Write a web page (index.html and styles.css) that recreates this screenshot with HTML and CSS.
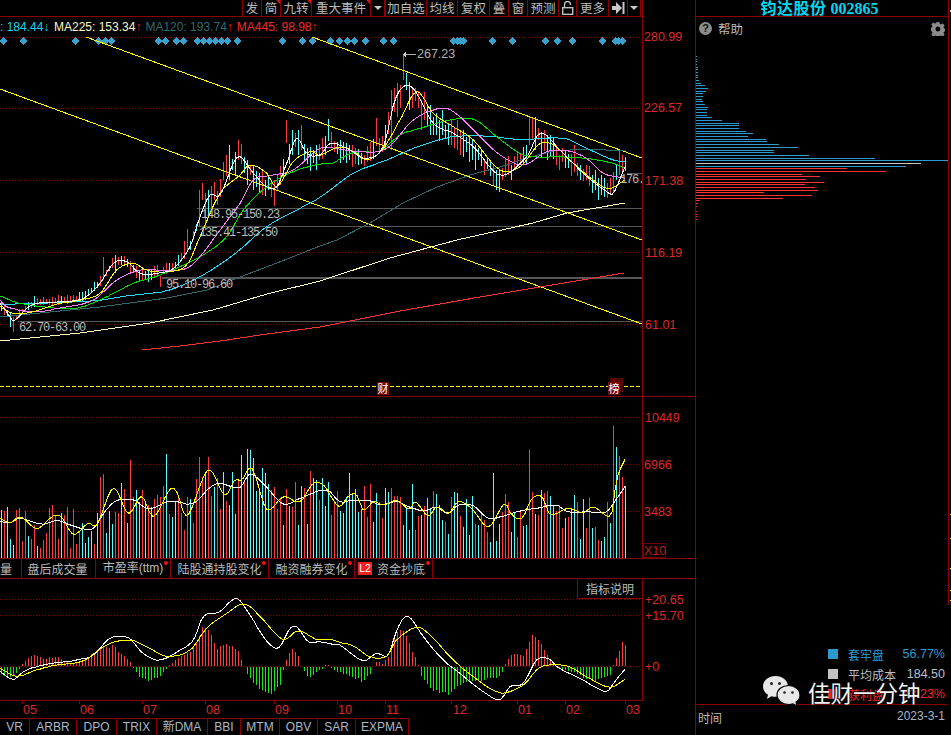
FILE: index.html
```html
<!DOCTYPE html>
<html lang="zh">
<head>
<meta charset="utf-8">
<title>钧达股份 002865</title>
<link rel="stylesheet" href="styles.css">
</head>
<body>
<div class="app">
  <main class="main">
    <section class="cell cell-price">
      <nav class="toolbar">
        <span class="tool w19">发</span>
        <span class="tool w19 flag">简</span>
        <span class="tool w31 flag">九转</span>
        <span class="tool w59 flag">重大事件</span>
        <span class="tool w14"><i class="caret"></i></span>
        <span class="tool w42 strong">加自选</span>
        <span class="tool w31">均线</span>
        <span class="tool w32">复权</span>
        <span class="tool w19">叠</span>
        <span class="tool w19">窗</span>
        <span class="tool w31">预测</span>
        <span class="tool w18">
          <svg class="tool-icon" width="12" height="14" viewBox="0 0 12 14"><path d="M2.5 6V3.5a3 3 0 0 1 6 0V4" fill="none" stroke="#c0c0c0" stroke-width="1.4"/><rect x="0.7" y="6.7" width="10" height="6.6" fill="none" stroke="#c0c0c0" stroke-width="1.4"/></svg>
        </span>
        <span class="tool w32">更多</span>
        <span class="tool w19">
          <svg class="tool-icon" width="13" height="12" viewBox="0 0 13 12"><path d="M0 4h4V0l6 6-6 6V8H0z" fill="#c8c8c8"/><rect x="10.5" y="0" width="2" height="12" fill="#c8c8c8"/></svg>
        </span>
        <span class="tool w13 last"><i class="caret"></i></span>
      </nav>
      <div class="legend">
        <span class="lg lg-cyan">: 184.44↓</span>
        <span class="lg lg-cream">MA225: 153.34<b class="up">↑</b></span>
        <span class="lg lg-teal">MA120: 193.74<b class="up">↑</b></span>
        <span class="lg lg-red">MA445: 98.98<b class="up">↑</b></span>
      </div>
      <svg id="price" class="chart" width="642" height="359" viewBox="0 37 642 359">
        <text class="note" x="417" y="58">267.23</text>
        <text class="lvl" x="201" y="218">148.95-150.23</text>
        <text class="lvl" x="199" y="236">135.41-135.50</text>
        <text class="lvl" x="166" y="288">95.10-96.60</text>
        <text class="lvl" x="19" y="331">62.70-63.00</text>
        <text class="lvl" x="620" y="183">176.</text>
        <rect x="610" y="378" width="13" height="14" fill="#5a0505"/>
        <rect x="377" y="382" width="12" height="13" fill="#7a0a0a"/>
        <rect x="608" y="382" width="12" height="13" fill="#7a0a0a"/>
        <text class="mark" x="377.5" y="393">财</text>
        <text class="mark" x="608.5" y="393">榜</text>
      </svg>
    </section>
    <aside class="cell-axis">
      <svg width="52" height="396" viewBox="643 0 52 396">
        <text class="ax" x="644" y="41">280.99</text>
        <text class="ax" x="644" y="112">226.57</text>
        <text class="ax" x="645" y="185">171.38</text>
        <text class="ax" x="645" y="257">116.19</text>
        <text class="ax" x="645" y="329">61.01</text>
      </svg>
    </aside>

    <section class="cell cell-vol">
      <svg id="vol" class="chart" width="642" height="161" viewBox="0 397 642 161"></svg>
    </section>
    <aside class="cell-axis">
      <svg width="52" height="161" viewBox="643 397 52 161">
        <text class="ax" x="645" y="422">10449</text>
        <text class="ax" x="644" y="469">6966</text>
        <text class="ax" x="644" y="516">3483</text>
        <rect x="643.5" y="543.5" width="22" height="14" class="x10-box"/>
        <text class="ax ax-dim" x="644" y="555">X10</text>
      </svg>
    </aside>

    <nav class="tabs">
      <span class="tab tab-cut">量</span>
      <span class="tab t74">盘后成交量</span>
      <span class="tab t75 dot">市盈率(ttm)</span>
      <span class="tab t98 dot">陆股通持股变化</span>
      <span class="tab t86 dot">融资融券变化</span>
      <span class="tab t78 dot"><em class="l2">L2</em>资金抄底</span>
    </nav>

    <section class="cell cell-macd">
      <svg id="macd" class="chart" width="642" height="121" viewBox="0 579 642 121"></svg>
      <span class="explain">指标说明</span>
    </section>
    <aside class="cell-axis">
      <svg width="52" height="121" viewBox="643 579 52 121">
        <text class="ax" x="645" y="604">+20.65</text>
        <text class="ax" x="645" y="620">+15.70</text>
        <text class="ax" x="645" y="671">+0</text>
      </svg>
    </aside>

    <div class="foot">
      <svg id="dates" class="dates" width="642" height="17" viewBox="0 701 642 17">
        <text class="dt" x="23" y="714">05</text>
        <text class="dt" x="80" y="714">06</text>
        <text class="dt" x="143" y="714">07</text>
        <text class="dt" x="206" y="714">08</text>
        <text class="dt" x="275" y="714">09</text>
        <text class="dt" x="338" y="714">10</text>
        <text class="dt" x="386" y="714">11</text>
        <text class="dt" x="453" y="714">12</text>
        <text class="dt" x="518" y="714">01</text>
        <text class="dt" x="566" y="714">02</text>
        <text class="dt" x="626" y="714">03</text>
      </svg>
      <nav class="bottom-tabs">
        <span class="bt b29">VR</span>
        <span class="bt b47">ARBR</span>
        <span class="bt b40">DPO</span>
        <span class="bt b40">TRIX</span>
        <span class="bt b51">新DMA</span>
        <span class="bt b33">BBI</span>
        <span class="bt b39">MTM</span>
        <span class="bt b38">OBV</span>
        <span class="bt b38">SAR</span>
        <span class="bt b53">EXPMA</span>
      </nav>
    </div>
  </main>

  <aside class="side">
    <header class="stock-title">钧达股份 <b>002865</b></header>
    <div class="help">
      <span class="help-q">?</span>
      <span class="help-text">帮助</span>
      <svg class="gear" width="14" height="14" viewBox="0 0 14 14"><path fill="#8c8c8c" fill-rule="evenodd" d="M5.600 0h2.800l.3 2 1.300.6 1.700-1.200 2 2-1.200 1.700.6 1.300 1.900.3v2.600l-1.900.3-.6 1.400 1.200 1.600-2 2-1.700-1.200-1.300.6-.3 1.900H5.600l-.3-1.900-1.300-.6-1.700 1.200-2-2 1.200-1.600-.6-1.400L-1 8.300V5.700l1.900-.3.6-1.300-1.200-1.700 2-2L4 1.600 5.300 1zM7 4.500a2.500 2.500 0 1 0 0 5 2.500 2.500 0 0 0 0-5z"/></svg>
    </div>
    <svg id="chips" class="chips" width="252" height="604" viewBox="696 40 252 604"></svg>
    <ul class="chip-legend">
      <li class="row row-blue"><i class="sw"></i><span class="name">套牢盘</span><span class="val">56.77%</span></li>
      <li class="row row-grey"><i class="sw"></i><span class="name">平均成本</span><span class="val">184.50</span></li>
      <li class="row row-red"><i class="sw"></i><span class="name">获利盘</span><span class="val">43.23%</span></li>
    </ul>
    <footer class="side-foot"><span>时间</span><span class="date">2023-3-1</span></footer>
  </aside>

  <svg class="rail" width="3" height="735" viewBox="948 0 3 735">
    <rect x="948" y="0" width="1" height="605" fill="#8b0000"/>
    <rect x="950" y="10" width="1" height="2" fill="#d0d0d0"/>
    <rect x="950" y="514" width="1" height="1" fill="#ffff00"/>
    <rect x="950" y="538" width="1" height="1" fill="#ffff00"/>
    <rect x="950" y="568" width="1" height="1" fill="#ffff00"/>
    <rect x="950" y="590" width="1" height="1" fill="#ffff00"/>
    <rect x="950" y="600" width="1" height="1" fill="#ffff00"/>
  </svg>

  <div class="watermark">
    <svg width="38" height="32" viewBox="0 0 38 32">
      <path fill="#e8e8e8" d="M12.500 0C19.400 0 25 4.600 25 10.400c0 5.800-5.600 10.400-12.500 10.400-1.500 0-2.900-.2-4.200-.6L4 23l1-4.300C2 16.800 0 13.800 0 10.400 0 4.600 5.600 0 12.500 0z"/>
      <path fill="#e8e8e8" stroke="#000" stroke-width="1.200" d="M25.500 9.500C32 9.500 37 13.700 37 19c0 2.900-1.500 5.400-3.900 7.100l.9 4-4-2.200c-1.400.4-2.900.6-4.500.6-6.500 0-11.500-4.200-11.500-9.500S19 9.500 25.500 9.500z"/>
      <circle cx="8.500" cy="7.500" r="1.500" fill="#222"/><circle cx="16.500" cy="7.500" r="1.500" fill="#222"/>
      <circle cx="21.500" cy="16.500" r="1.300" fill="#222"/><circle cx="29.500" cy="16.500" r="1.300" fill="#222"/>
    </svg>
    <span class="wm-text">佳财一分钟</span>
  </div>
</div>
<script src="app.js"></script>
</body>
</html>
```

FILE: styles.css
```css
* { box-sizing: border-box; margin: 0; padding: 0; }
html, body { width: 951px; height: 735px; background: #000; overflow: hidden; }
body { font-family: "Liberation Sans", "Noto Sans CJK SC", sans-serif; font-size: 12px; color: #c0c0c0; }

.app { position: relative; display: flex; width: 951px; height: 735px; }

.main {
  width: 696px;
  height: 735px;
  flex: none;
  display: grid;
  grid-template-columns: 643px 52px;
  grid-template-rows: 397px 162px 20px 122px 34px;
  border-right: 1px solid #8b0000;
}
.cell { position: relative; border-right: 1px solid #8b0000; border-bottom: 1px solid #8b0000; }
.cell-axis { border-bottom: 1px solid #8b0000; }
.cell-axis svg, .chart, .dates, .chips, .rail { display: block; }
.cell-macd + .cell-axis { border-bottom: 0; }
.rail { flex: none; }

.toolbar {
  height: 17px;
  display: flex;
  justify-content: flex-end;
  border-bottom: 1px solid #8b0000;
  padding-right: 1px;
}
.tool {
  position: relative;
  display: flex;
  align-items: center;
  justify-content: center;
  height: 16px;
  border-left: 1px solid #8b0000;
  font-family: "Noto Sans CJK SC", sans-serif;
  font-size: 12.5px;
  line-height: 16px;
  color: #bcbcbc;
  white-space: nowrap;
}
.strong { border-left-width: 2px; }
.last { border-right: 1px solid #8b0000; }
.flag::after {
  content: "";
  position: absolute;
  top: 0;
  right: 0;
  border-top: 4px solid #e01010;
  border-left: 4px solid transparent;
}
.caret { display: block; width: 0; height: 0; border-top: 4px solid #c8c8c8; border-left: 4px solid transparent; border-right: 4px solid transparent; }
.tool-icon { display: block; }
.w13 { width: 14px; } .w14 { width: 14px; } .w18 { width: 18px; } .w19 { width: 19px; }
.w31 { width: 31px; } .w32 { width: 32px; } .w42 { width: 42px; } .w59 { width: 59px; }

.legend { height: 20px; display: flex; gap: 4px; align-items: center; white-space: nowrap; font-size: 12px; overflow: hidden; }
.lg b { font-weight: 400; }
.lg-cyan { color: #12d6f0; width: 50px; }
.lg-cream { color: #fff8c8; }
.lg-teal { color: #2e6b70; }
.lg-red { color: #f22a2a; }
.up { color: #f22a2a; }

svg text { font-family: "Liberation Sans", "Noto Sans CJK SC", sans-serif; }
.ax { font-size: 12.5px; fill: #dd2828; }
.ax-dim { fill: #b81e1e; }
.x10-box { fill: none; stroke: #6e0000; }
.note { font-size: 12.5px; fill: #b0b0b0; }
.lvl { font-family: "Liberation Mono", monospace; font-size: 12px; letter-spacing: -1.2px; fill: #bdbdbd; }
.mark { font-family: "Noto Sans CJK SC", sans-serif; font-size: 11px; fill: #fff; }

.tabs {
  grid-column: 1 / 3;
  display: flex;
  border-bottom: 1px solid #8b0000;
}
.tab {
  position: relative;
  display: flex;
  align-items: center;
  justify-content: center;
  height: 19px;
  border-right: 1px solid #8b0000;
  font-family: "Noto Sans CJK SC", sans-serif;
  font-size: 12px;
  line-height: 19px;
  color: #bcbcbc;
  white-space: nowrap;
}
.tab:nth-child(3) { font-family: "Liberation Sans", "Noto Sans CJK SC", sans-serif; }
.tab-cut { width: 22px; justify-content: flex-start; }
.t74 { width: 74px; padding-right: 2px; } .t75 { width: 75px; } .t98 { width: 98px; } .t86 { width: 86px; } .t78 { width: 78px; padding-right: 4px; }
.dot::after {
  content: "";
  position: absolute;
  top: 2px;
  right: 2px;
  width: 4px;
  height: 4px;
  border-radius: 50%;
  background: #f01010;
}
.l2 {
  display: inline-block;
  width: 14px;
  height: 13px;
  margin-right: 5px;
  background: #f02020;
  color: #fff;
  font-family: "Liberation Sans", sans-serif;
  font-style: normal;
  font-size: 10.5px;
  line-height: 13px;
  text-align: center;
}

.explain {
  position: absolute;
  top: 0;
  right: 0;
  width: 65px;
  height: 20px;
  border-left: 1px solid #8b0000;
  border-bottom: 1px solid #8b0000;
  background: #000;
  font-family: "Noto Sans CJK SC", sans-serif;
  font-size: 12px;
  line-height: 19px;
  text-align: center;
  color: #bcbcbc;
}

.foot { grid-column: 1 / 3; display: flex; flex-direction: column; }
.dt { font-size: 12.5px; fill: #dd2828; }
.bottom-tabs { display: flex; width: 409px; height: 17px; border-top: 1px solid #8b0000; }
.bt {
  display: flex;
  align-items: center;
  justify-content: center;
  height: 16px;
  border-right: 1px solid #8b0000;
  color: #a9b9cb;
  font-size: 12px;
  line-height: 16px;
  white-space: nowrap;
}
.b29 { width: 30px; } .b47 { width: 47px; } .b40 { width: 40px; } .b51 { width: 51px; } .b33 { width: 33px; }
.b39 { width: 39px; } .b38 { width: 38px; } .b53 { width: 53px; }

.side { width: 252px; flex: none; height: 735px; display: flex; flex-direction: column; }
.stock-title {
  height: 17px;
  border-bottom: 1px solid #8b0000;
  font-family: "Noto Sans CJK SC", sans-serif;
  font-weight: 700;
  font-size: 16px;
  line-height: 14px;
  letter-spacing: .5px;
  color: #00d8f0;
  text-align: center;
  padding-right: 5px;
  white-space: nowrap;
  overflow: hidden;
}
.stock-title b { font-family: "Liberation Serif", serif; font-size: 16px; letter-spacing: 0; }
.help { height: 23px; flex: none; display: flex; align-items: center; padding: 0 3px 0 3px; }
.help-q {
  width: 13px; height: 13px; border-radius: 50%;
  background: #8c8c8c; color: #111;
  font-size: 11px; font-weight: 700; line-height: 13px; text-align: center;
}
.help-text { margin-left: 6px; font-family: "Noto Sans CJK SC", sans-serif; font-size: 12.5px; color: #bcbcbc; }
.gear { margin-left: auto; }
.chips { flex: none; }

.chip-legend { list-style: none; height: 60px; flex: none; }
.row { display: flex; align-items: center; height: 20px; padding: 0 3px 0 132px; }
.sw { width: 10px; height: 10px; flex: none; }
.name { margin-left: 10px; font-family: "Noto Sans CJK SC", sans-serif; font-size: 12px; }
.val { margin-left: auto; font-size: 12.5px; }
.row-blue .sw { background: #2c9bcb; } .row-blue .name, .row-blue .val { color: #2c9bcb; }
.row-grey .sw { background: #c4c4c4; } .row-grey .name { color: #bcbcbc; } .row-grey .val { color: #b4c0cc; }
.row-red .sw { background: #f02a2a; } .row-red .name, .row-red .val { color: #f02a2a; }

.side-foot {
  flex: 1;
  display: flex;
  justify-content: space-between;
  padding: 4px 3px 0 2px;
  border-top: 1px solid #8b0000;
  font-family: "Noto Sans CJK SC", sans-serif;
  font-size: 12px;
  color: #bcbcbc;
}
.date { font-family: "Liberation Sans", sans-serif; font-size: 12px; color: #a7b7c9; }

.watermark {
  position: absolute;
  left: 763px;
  top: 676px;
  display: flex;
  align-items: center;
  gap: 7px;
}
.wm-text {
  font-family: "Noto Sans CJK SC", sans-serif;
  font-size: 22.5px;
  line-height: 32px;
  color: #f4f4f4;
  text-shadow: 0 0 2px #000, 0 0 1px #000;
  white-space: nowrap;
}
```

FILE: app.js
```js
(function () {
  var NS = "http://www.w3.org/2000/svg";
  var RED = "#ff3a3a", CYAN = "#54ffff", GREEN = "#10e810", DOT = "#8b0000";

  var seed = 20230301;
  function rnd() { seed = (seed * 1664525 + 1013904223) >>> 0; return seed / 4294967296; }

  function el(parent, name, attrs) {
    var n = document.createElementNS(NS, name);
    for (var k in attrs) n.setAttribute(k, attrs[k]);
    parent.appendChild(n);
    return n;
  }
  function layer(svg) {
    var g = document.createElementNS(NS, "g");
    g.setAttribute("shape-rendering", "crispEdges");
    svg.insertBefore(g, svg.firstChild);
    return g;
  }
  function hdots(g, y, x1, x2) {
    el(g, "line", { x1: x1 || 0, x2: x2 || 642, y1: y + .5, y2: y + .5, stroke: DOT, "stroke-dasharray": "1 2" });
  }
  function poly(g, pts, color, w) {
    el(g, "polyline", { points: pts.map(function (p) { return p[0] + "," + p[1]; }).join(" "), fill: "none", stroke: color, "stroke-width": w || 1 });
  }
  function vbar(g, x, y1, y2, color) {
    if (y2 < y1) { var t = y1; y1 = y2; y2 = t; }
    el(g, "rect", { x: x, y: Math.round(y1), width: 1, height: Math.max(1, Math.round(y2 - y1)), fill: color });
  }
  function interp(pts, x) {
    if (x <= pts[0][0]) return pts[0][1];
    for (var i = 1; i < pts.length; i++) {
      if (x <= pts[i][0]) {
        var a = pts[i - 1], b = pts[i];
        return a[1] + (b[1] - a[1]) * (x - a[0]) / (b[0] - a[0]);
      }
    }
    return pts[pts.length - 1][1];
  }
  // Hermite resampling onto the 3px bar grid, so traced curves bend like the moving averages they are.
  function smooth(pts) {
    var out = [];
    function tan(i) {
      var a = pts[Math.max(0, i - 1)], b = pts[Math.min(pts.length - 1, i + 1)];
      return (b[1] - a[1]) / (b[0] - a[0]);
    }
    var xEnd = pts[pts.length - 1][0];
    for (var x = pts[0][0], s = 0; x < xEnd; x += 3) {
      while (s < pts.length - 2 && x > pts[s + 1][0]) s++;
      var p0 = pts[s], p1 = pts[s + 1], d = p1[0] - p0[0], t = (x - p0[0]) / d;
      var t2 = t * t, t3 = t2 * t;
      var y = (2*t3 - 3*t2 + 1) * p0[1] + (t3 - 2*t2 + t) * d * tan(s)
            + (-2*t3 + 3*t2) * p1[1] + (t3 - t2) * d * tan(s + 1);
      out.push([x, Math.round(y * 2) / 2]);
    }
    out.push(pts[pts.length - 1]);
    return out;
  }
  // Traced points are 3x crop coordinates: convert back to page pixels.
  function crop(list, ox, oy) {
    return list.map(function (p) { return [ox + p[0] / 3, oy + p[1] / 3]; });
  }
  function join(a, b) {
    var lim = b[0][0];
    return a.filter(function (p) { return p[0] < lim; }).concat(b);
  }

  /* ---------- price pane ---------- */
  var ma5 = join(
    crop([[0,520],[20,545],[40,572],[80,535],[110,520],[180,515],[250,505],[300,460],[340,400],[380,395],[420,430],[470,430],[520,415],[570,350],[600,260],[630,195],[660,195],[700,100],[720,80],[760,130],[800,170],[830,170],[860,100],[890,25],[920,70],[960,100]], 0, 130),
    crop([[0,285],[30,250],[90,270],[135,295],[190,260],[225,120],[260,75],[290,100],[340,190],[400,220],[460,260],[540,345],[620,290],[660,220],[720,270],[790,340],[860,395],[880,400],[915,320]], 320, 60));
  var ma10 = join(
    crop([[0,530],[40,550],[100,545],[180,520],[240,510],[300,490],[350,420],[400,400],[440,420],[500,425],[560,405],[600,320],[660,190],[720,135],[750,105],[800,130],[830,170],[880,95],[930,65],[960,80]], 0, 130),
    crop([[0,285],[60,260],[110,280],[140,300],[190,265],[240,180],[290,95],[340,160],[400,200],[460,240],[540,330],[600,320],[660,250],[700,255],[760,310],[840,375],[870,385],[915,360]], 320, 60));
  var ma20 = join(
    crop([[0,510],[20,530],[100,545],[200,530],[280,510],[350,450],[420,420],[480,420],[560,415],[600,380],[660,300],[720,220],[760,150],[820,135],[880,120],[960,100]], 0, 130),
    crop([[0,265],[60,268],[120,275],[200,265],[280,180],[340,150],[380,145],[420,170],[480,230],[540,285],[610,315],[680,275],[740,272],[800,295],[850,340],[915,355]], 320, 60));
  var ma30 = join(
    crop([[0,498],[60,520],[220,535],[300,510],[400,460],[480,435],[600,380],[680,320],[730,240],[800,170],[880,125],[960,100]], 0, 130),
    crop([[0,312],[40,308],[80,285],[120,275],[180,272],[240,225],[300,205],[350,190],[420,175],[470,182],[530,230],[600,280],[640,290],[720,290],[800,295],[880,310],[915,325]], 320, 60));
  var ma60 = join(
    crop([[0,522],[100,520],[300,510],[400,495],[500,482],[600,440],[700,375],[800,290],[900,235],[960,205]], 0, 130),
    crop([[0,412],[100,340],[200,300],[300,258],[400,230],[500,228],[600,238],[730,235],[800,265],[880,300],[915,305]], 320, 60));
  var ma120 = [[0,317],[50,312],[100,307],[167,298],[207,290],[240,277],[277,263],[320,246],[337,240],[370,223],[403,203],[437,187],[470,175],[507,165],[520,160],[553,151],[587,149],[625,151]];
  var ma225 = [[0,341],[80,333],[150,323],[213,310],[267,294],[320,281],[390,258],[457,240],[533,223],[567,213],[625,203]];
  var ma445 = [[142,350],[180,346],[220,341],[260,335],[320,327],[400,311],[480,297],[540,287],[600,277],[624,273]];

  var barColor = {};
  function bars(fn) { for (var x = 1; x <= 625; x += 3) fn(x); }

  var candleFix = {
    13:[317,332,RED], 10:[312,327,CYAN], 34:[296,307,CYAN], 103:[257,280,RED], 115:[255,273,CYAN],
    160:[276,287,RED], 184:[241,259,RED], 187:[229,250,RED], 199:[190,226,RED], 202:[183,200,RED],
    205:[193,230,RED], 208:[190,215,CYAN], 211:[186,212,RED], 220:[179,197,RED], 223:[162,180,RED],
    226:[155,176,RED], 229:[145,180,CYAN], 235:[152,175,CYAN], 238:[140,160,RED], 247:[160,185,CYAN],
    253:[165,190,CYAN], 262:[170,195,RED], 268:[175,190,CYAN], 274:[180,206,RED], 286:[120,143,RED],
    292:[130,155,CYAN], 298:[130,155,CYAN], 301:[125,150,RED], 316:[145,170,CYAN], 328:[119,141,CYAN],
    376:[118,146,RED], 385:[125,150,CYAN], 391:[90,150,RED], 397:[83,117,RED], 400:[85,108,RED],
    403:[54,80,RED], 406:[73,90,CYAN], 409:[82,110,CYAN], 412:[88,108,RED], 421:[100,130,RED],
    424:[92,120,RED], 430:[105,135,CYAN], 436:[113,135,CYAN], 442:[110,135,CYAN], 451:[120,145,RED],
    457:[120,150,RED], 463:[130,157,CYAN], 469:[135,162,CYAN], 475:[145,170,CYAN], 484:[160,175,RED],
    493:[165,185,RED], 496:[170,190,CYAN], 499:[170,192,CYAN], 502:[168,180,RED], 511:[165,180,CYAN],
    529:[117,145,RED], 532:[117,140,RED], 535:[117,150,CYAN], 541:[132,157,CYAN], 547:[135,160,CYAN],
    556:[145,165,RED], 559:[155,170,RED], 574:[145,172,RED], 586:[165,180,RED], 589:[166,186,RED],
    595:[170,190,CYAN], 601:[175,195,CYAN], 604:[178,197,CYAN], 607:[183,198,RED], 610:[178,195,RED],
    613:[172,193,RED], 616:[165,180,CYAN], 619:[150,175,RED], 622:[155,173,RED], 625:[157,171,CYAN]
  };

  var price = document.getElementById("price");
  var g = layer(price);
  [37,108,180,252,324].forEach(function (y) { hdots(g, y); });
  el(g, "line", { x1: 0, x2: 642, y1: 386.5, y2: 386.5, stroke: "#ffff00", "stroke-dasharray": "4 2" });
  [[208,197],[226,195],[321,18],[173,627]].forEach(function (l) {
    el(g, "line", { x1: l[1], x2: 642, y1: l[0] + .5, y2: l[0] + .5, stroke: "#565656" });
  });
  el(g, "rect", { x: 162, y: 277, width: 480, height: 2, fill: "#565656" });

  // signal diamonds
  [8,70,224,295,315,333,473,495,527,549,592,610,628,646,664,682,710,845,907,935,990,1016,1042,1062,1096,1150,1178,1360,1370,1380,1390]
    .map(function (z) { return z / 3; })
    .concat([35,97,196,232,277,367,405,415,425].map(function (z) { return 480 + z / 3; }))
    .forEach(function (x) {
      var c = Math.round(x);
      el(g, "polygon", { points: (c-4)+",41 "+c+",37 "+(c+4)+",41 "+c+",45", fill: "#3aa0cc" });
    });

  // candles
  bars(function (x) {
    var yc = interp(ma5, x);
    var rising = interp(ma5, x + 3) < interp(ma5, x - 6);
    var color = rnd() < (rising ? 0.72 : 0.28) ? RED : CYAN;
    var amp = x < 130 ? 8 : x < 200 ? 10 : x < 300 ? 17 : 19;
    var h = amp * (0.55 + rnd() * 0.7);
    var top = yc - h * (rising ? 0.7 : 0.3), bot = top + h;
    var fix = candleFix[x];
    if (fix) { top = fix[0]; bot = fix[1]; color = fix[2]; }
    barColor[x] = color;
    vbar(g, x, top, bot, color);
  });

  [
    [[86,37],[642,240]],
    [[0,89],[642,324]],
    [[312,37],[642,158]]
  ].forEach(function (l) { poly(g, l, "#ffff00"); });
  poly(g, ma445, "#ff3232");
  poly(g, ma225, "#ffffc0");
  poly(g, ma120, "#33686e");
  poly(g, smooth(ma60), "#22ddff");
  poly(g, smooth(ma30), "#00e000");
  poly(g, smooth(ma20), "#ff80ff");
  poly(g, smooth(ma10), "#ffff00");
  poly(g, smooth(ma5), "#ffffff");
  // high-price callout
  el(g, "line", { x1: 404, x2: 416, y1: 54.5, y2: 54.5, stroke: "#b0b0b0" });
  el(g, "polygon", { points: "403,54.5 406,52 406,57", fill: "#d0d0d0" });

  /* ---------- volume pane ---------- */
  var volY = join(
    crop([[0,355],[30,368],[60,350],[110,385],[160,348],[185,352],[220,403],[265,370],[290,375],[340,265],[385,340],[425,290],[460,350],[510,268],[530,275],[560,348],[625,210],[675,285],[705,240],[725,240],[755,205],[795,320],[812,328],[850,290],[900,305],[940,250],[970,255],[1000,300],[1020,322]], 0, 400),
    crop([[0,410],[25,378],[50,375],[70,420],[100,395],[130,405],[170,392],[210,418],[225,395],[265,438],[290,410],[325,430],[355,395],[395,415],[445,470],[495,400],[510,428],[545,445],[575,388],[605,380],[630,432],[685,415],[730,428],[760,410],[800,438],[815,430],[830,330],[855,268]], 340, 370));
  var volW = join(
    crop([[0,365],[30,368],[60,355],[100,367],[130,372],[175,362],[210,375],[250,387],[280,385],[320,328],[350,302],[400,300],[440,325],[470,320],[510,303],[580,310],[630,262],[660,250],[720,262],[750,222],[800,262],[850,312],[900,295],[980,270],[1020,295]], 0, 400),
    crop([[0,395],[30,392],[90,392],[120,405],[170,395],[205,410],[250,422],[290,412],[325,430],[355,405],[400,407],[445,445],[490,438],[545,422],[590,415],[650,405],[680,425],[740,425],[800,425],[820,400],[855,350]], 340, 370));
  var volFix = {};
  [[499,162,CYAN],[390,180,RED],[598,170,RED],[625,170,RED],[725,165,CYAN],[742,148,CYAN],[751,150,CYAN],[300,232,RED],[310,222,RED],[931,212,RED],[940,235,CYAN],[671,215,CYAN],[697,215,CYAN],[715,240,RED],[589,237,RED],[606,232,RED],[616,216,CYAN],[490,258,RED],[823,262,RED],[859,267,RED],[904,258,CYAN],[913,264,RED],[157,315,RED],[148,325,RED],[49,330,RED],[3,330,CYAN]]
    .forEach(function (p) { volFix[1 + 3 * Math.round((p[0] / 3 - 1) / 3)] = [400 + p[1] / 3, p[2]]; });
  [[820,168,RED],[829,232,CYAN],[838,258,RED],[847,322,RED],[856,348,CYAN],[568,240,RED],[577,366,RED],[460,310,CYAN],[28,310,CYAN],[217,342,CYAN],[154,354,RED],[91,342,RED],[280,363,RED],[496,372,RED],[352,370,CYAN],[801,396,RED]]
    .forEach(function (p) { volFix[1 + 3 * Math.round((340 + p[0] / 3 - 1) / 3)] = [370 + p[1] / 3, p[2]]; });

  var vol = document.getElementById("vol");
  var gv = layer(vol);
  [417,464,511].forEach(function (y) { hdots(gv, y); });
  bars(function (x) {
    var color = rnd() < 0.5 ? barColor[x] : (rnd() < 0.5 ? RED : CYAN);
    var ref = interp(volW, x);
    var top = ref + (rnd() - 0.38) * 48;
    if (top > 548) top = 548;
    var f = volFix[x];
    if (f) { top = f[0]; color = f[1]; }
    vbar(gv, x, top, 558, color);
  });
  poly(gv, smooth(volW), "#ffffff");
  poly(gv, smooth(volY), "#ffff00");

  /* ---------- MACD pane ---------- */
  var dif = join(
    crop([[0,395],[40,418],[70,395],[110,380],[170,368],[230,360],[280,345],[330,295],[385,293],[430,340],[480,360],[540,330],[580,300],[610,230],[660,215],[690,185],[715,178],[750,225],[790,290],[820,322],[840,320],[870,265],[890,260],[925,305],[960,305],[1010,315]], 0, 540),
    crop([[0,225],[70,272],[110,250],[145,255],[165,195],[190,145],[210,143],[250,200],[310,270],[360,310],[430,365],[480,388],[510,350],[550,340],[590,270],[630,268],[650,290],[720,325],[800,365],[820,340],[855,298]], 340, 570));
  var dea = join(
    crop([[0,385],[50,408],[110,390],[170,375],[250,362],[320,315],[390,300],[440,320],[500,348],[570,330],[620,265],[680,220],[735,192],[790,240],[850,298],[895,272],[950,298],[990,298]], 0, 540),
    crop([[0,217],[40,228],[90,260],[140,258],[170,210],[230,172],[270,195],[340,270],[400,320],[480,368],[550,345],[600,292],[680,288],[740,320],[810,352],[855,328]], 340, 570));
  var histA = [[0,-25],[30,-30],[50,-15],[60,0],[70,10],[85,25],[100,32],[120,25],[135,18],[150,25],[170,30],[190,15],[210,8],[240,10],[270,35],[310,55],[340,58],[370,30],[390,10],[400,-5],[420,-30],[445,-38],[470,-35],[495,-10],[510,5],[530,20],[560,35],[590,70],[605,115],[630,100],[650,50],[680,70],[710,50],[730,5],[740,-20],[770,-60],[815,-85],[840,-50],[850,-5],[860,20],[870,50],[890,40],[900,5],[905,-5],[925,-30],[950,-15],[970,-2],[978,8],[990,0],[1010,-15]];
  var histB = [[0,-15],[70,-45],[95,-15],[100,2],[110,18],[125,5],[145,30],[160,85],[175,105],[190,105],[200,90],[215,40],[230,20],[235,-2],[245,-30],[275,-70],[325,-80],[365,-50],[400,-40],[450,-35],[480,-30],[495,5],[510,30],[530,38],[550,28],[575,95],[595,80],[610,50],[630,20],[645,0],[660,-5],[700,-15],[740,-40],[780,-35],[810,-25],[820,5],[830,30],[846,70],[855,65]];
  var hist = join(
    histA.map(function (p) { return [p[0] / 3, p[1] / 3]; }),
    histB.map(function (p) { return [340 + p[0] / 3, p[1] / 3]; }));

  var macd = document.getElementById("macd");
  var gm = layer(macd);
  [599,615].forEach(function (y) { hdots(gm, y); });
  bars(function (x) {
    var h = interp(hist, x);
    h += (rnd() - 0.5) * Math.min(3, Math.abs(h) * 0.25);
    if (h >= 0.5) vbar(gm, x, 666 - h, 666, RED);
    else if (h <= -0.5) vbar(gm, x, 667, 667 - h, GREEN);
  });
  hdots(gm, 666);
  poly(gm, smooth(dif), "#ffffff");
  poly(gm, smooth(dea), "#ffff00");

  /* ---------- date ticks ---------- */
  var gd = layer(document.getElementById("dates"));
  [22,79,142,205,274,337,385,451,517,565,625].forEach(function (x) {
    el(gd, "rect", { x: x, y: 701, width: 1, height: 3, fill: "#8b0000" });
  });

  /* ---------- chip distribution ---------- */
  var R = "#ff3030";
  var chips = [[49,21],[58,21],[64,21],[73,21],[82,24],[88,24],[97,24],[106,24],[112,24],[121,27],[130,33],[136,45],[145,54],[154,48],[160,39],[169,39],[178,36],[184,39],[193,45],[202,54],[208,51],[217,51],[226,51],[232,66],[241,96],[250,147],[256,147],[265,147],[274,168],[280,189],[289,174],[298,228],[304,231],[313,267],[322,324],[331,252],[337,252],[346,357],[355,555],[361,774],[370,693,"#c8c8c8"],[379,648],[385,471,R],[394,588,R],[403,336,R],[409,390,R],[418,348,R],[427,402,R],[433,345,R],[442,375,R],[451,384,R],[457,222,R],[466,366,R],[475,279,R],[481,30,R],[490,24,R],[499,21,R],[514,21,R],[523,21,R],[529,21,R],[538,21,R]];
  var gc = layer(document.getElementById("chips"));
  chips.forEach(function (c) {
    el(gc, "rect", { x: 696, y: Math.round(40 + c[0] / 3), width: Math.round((c[1] - 18) / 3), height: 1, fill: c[2] || "#2c9bcb" });
  });
})();
```
